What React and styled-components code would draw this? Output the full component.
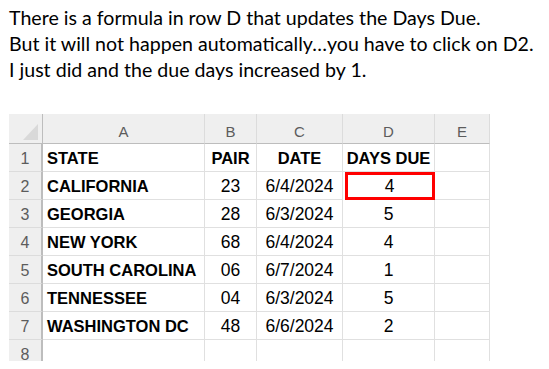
import React from 'react'
import styled, { createGlobalStyle } from 'styled-components'

const GlobalStyle = createGlobalStyle`
  html, body {
    margin: 0;
    padding: 0;
    background: #ffffff;
  }
`;

const Page = styled.div`
  width: 549px;
  height: 369px;
  overflow: hidden;
  background: #ffffff;
`;

const Note = styled.div`
  padding: 5px 0 0 9px;
  font-family: Lato, "Open Sans", sans-serif;
  font-size: 19.6px;
  line-height: 26px;
  color: #000000;
  white-space: nowrap;
`;

const Sheet = styled.div`
  margin: 31px 0 0 9px;
  width: 481px;
  height: 247px;
  overflow: hidden;
  display: grid;
  grid-template-columns: 34px 162px 52px 86px 92px 55px;
  grid-template-rows: 30px repeat(8, 28px);
  font-family: "Liberation Sans", Arial, sans-serif;
`;

const Corner = styled.div`
  position: relative;
  background: #efefef;
  border-right: 1px solid #bdbdbd;
  border-bottom: 1px solid #bdbdbd;

  &::after {
    content: '';
    position: absolute;
    right: 4px;
    bottom: 3px;
    width: 0;
    height: 0;
    border-left: 15px solid transparent;
    border-bottom: 16px solid #d9d9d9;
  }
`;

const ColHead = styled.div`
  display: flex;
  align-items: center;
  justify-content: center;
  padding-top: 5px;
  background: #efefef;
  border-right: 1px solid #dcdcdc;
  border-bottom: 1px solid #bdbdbd;
  color: #5c5c5c;
  font-size: 15px;
`;

const RowHead = styled.div`
  display: flex;
  align-items: center;
  justify-content: center;
  padding-top: 2px;
  background: #efefef;
  border-right: 2px solid #bdbdbd;
  border-bottom: 1px solid #dcdcdc;
  color: #5c5c5c;
  font-size: 16px;
`;

const Cell = styled.div`
  display: flex;
  align-items: center;
  justify-content: ${p => (p.$left ? 'flex-start' : 'center')};
  padding: 1px 0 0 ${p => (p.$left ? '4px' : '0')};
  border-right: 1px solid #e0e0e0;
  border-bottom: 1px solid #e0e0e0;
  color: #000000;
  font-size: ${p => (p.$bold ? '16.5px' : '17.5px')};
  font-weight: ${p => (p.$bold ? 700 : 400)};
  white-space: nowrap;
  ${p => p.$selected && `
    outline: 3px solid #ff0000;
    outline-offset: -3px;
    margin-left: 2px;
  `}
`;

const columns = ['A', 'B', 'C', 'D', 'E'];

const rows = [
  ['CALIFORNIA', '23', '6/4/2024', '4'],
  ['GEORGIA', '28', '6/3/2024', '5'],
  ['NEW YORK', '68', '6/4/2024', '4'],
  ['SOUTH CAROLINA', '06', '6/7/2024', '1'],
  ['TENNESSEE', '04', '6/3/2024', '5'],
  ['WASHINGTON DC', '48', '6/6/2024', '2'],
];

const App = () => {
  return (
    <Page>
      <GlobalStyle />
      <Note>
        <div>There is a formula in row D that updates the Days Due.</div>
        <div>But it will not happen automatically…you have to click on D2.</div>
        <div>I just did and the due days increased by 1.</div>
      </Note>
      <Sheet>
        <Corner />
        {columns.map(c => <ColHead key={c}>{c}</ColHead>)}

        <RowHead>1</RowHead>
        <Cell $bold $left>STATE</Cell>
        <Cell $bold>PAIR</Cell>
        <Cell $bold>DATE</Cell>
        <Cell $bold>DAYS DUE</Cell>
        <Cell />

        {rows.map((r, i) => (
          <React.Fragment key={r[0]}>
            <RowHead>{i + 2}</RowHead>
            <Cell $bold $left>{r[0]}</Cell>
            <Cell>{r[1]}</Cell>
            <Cell>{r[2]}</Cell>
            <Cell $selected={i === 0}>{r[3]}</Cell>
            <Cell />
          </React.Fragment>
        ))}

        <RowHead>8</RowHead>
        <Cell />
        <Cell />
        <Cell />
        <Cell />
        <Cell />
      </Sheet>
    </Page>
  );
}

export default App;
